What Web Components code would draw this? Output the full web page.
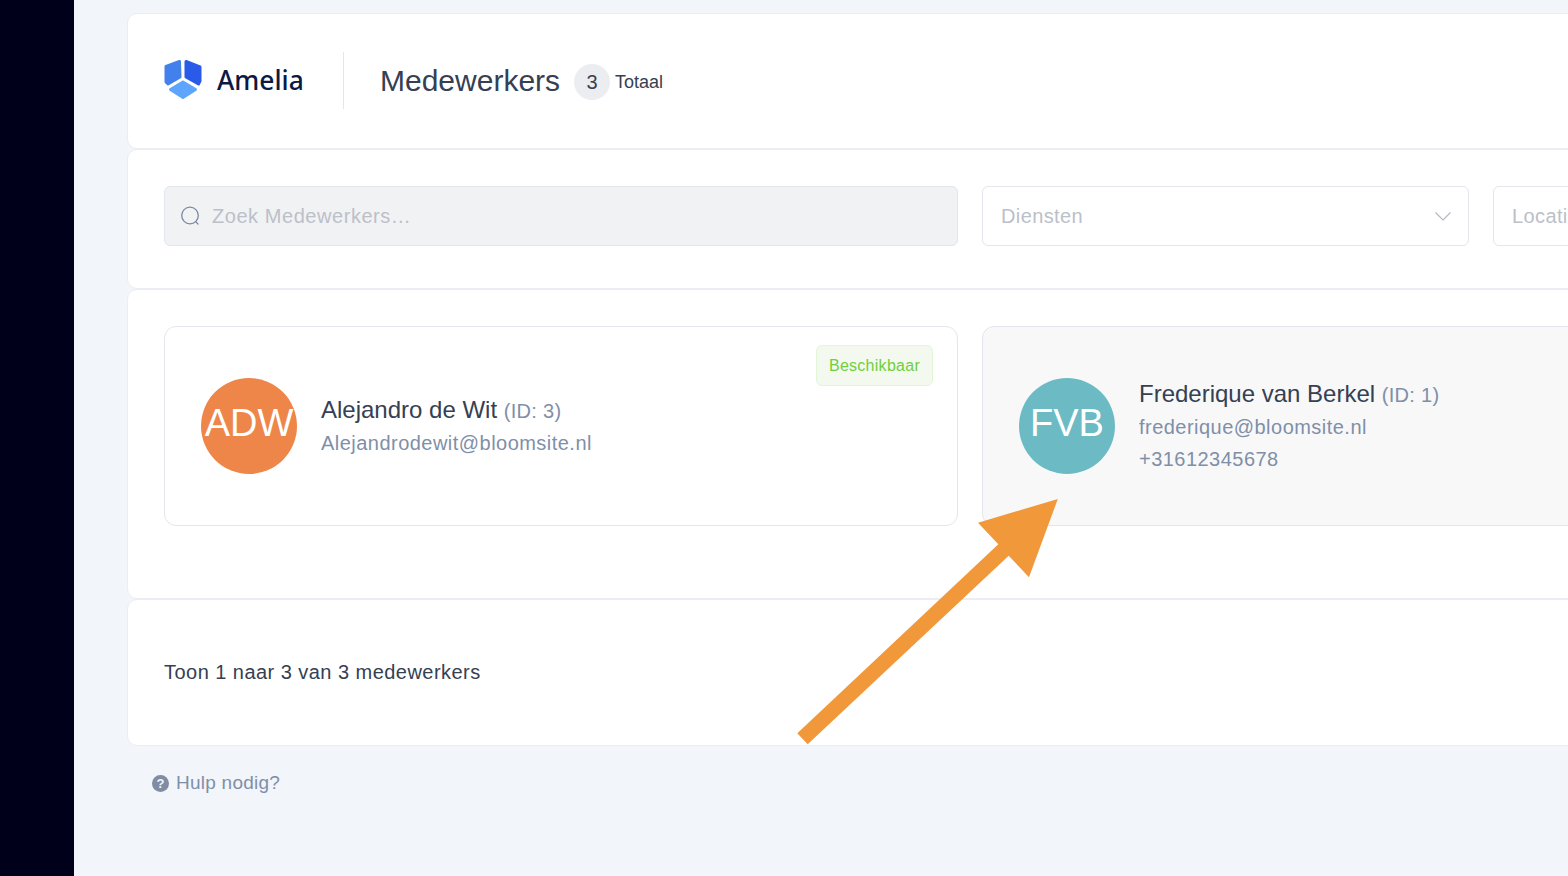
<!DOCTYPE html>
<html lang="nl">
<head>
<meta charset="utf-8">
<title>Medewerkers</title>
<style>
	html, body {
		margin: 0;
		height: 100%;
		overflow: hidden;
		background: #f2f5fa;
		font-family: "Liberation Sans", Arial, sans-serif;
		color: #354052;
	}
</style>
</head>
<body>
<app-shell>
	<app-panel style="--panel-height: 136px; --panel-top: 13px; --panel-pad: 38px 36px 0">
		<page-header count="3"></page-header>
	</app-panel>
	<app-panel style="--panel-height: 140px; --panel-pad: 36px 36px 0">
		<filter-bar>
			<search-box placeholder="Zoek Medewerkers…"></search-box>
			<select-box placeholder="Diensten"></select-box>
			<select-box placeholder="Locaties"></select-box>
		</filter-bar>
	</app-panel>
	<app-panel style="--panel-height: 310px; --panel-pad: 36px 36px 0">
		<employee-grid>
			<employee-card initials="ADW" color="#ee8549" name="Alejandro de Wit" employee-id="3" email="Alejandrodewit@bloomsite.nl" available></employee-card>
			<employee-card initials="FVB" color="#6cbbc4" name="Frederique van Berkel" employee-id="1" email="frederique@bloomsite.nl" phone="+31612345678" muted></employee-card>
		</employee-grid>
	</app-panel>
	<app-panel style="--panel-height: 147px; --panel-pad: 60px 36px 0">
		<span style="font-size: 20px; line-height: 24px; letter-spacing: .46px">Toon 1 naar 3 van 3 medewerkers</span>
	</app-panel>
	<help-link>Hulp nodig?</help-link>
</app-shell>
<call-arrow></call-arrow>

<script>
	class AppShell extends HTMLElement {
		constructor() {
			super();
			this.attachShadow({ mode: "open" }).innerHTML = `
			<style>
				:host {
					display: flex;
					height: 876px;
				}
				.side {
					flex: 0 0 74px;
					background: #00001a;
				}
				.main {
					flex: 0 0 1686px;
					margin-left: 53px;
					display: flex;
					flex-direction: column;
				}
			</style>
			<div class="side"></div>
			<div class="main"><slot></slot></div>`;
		}
	}

	class AppPanel extends HTMLElement {
		constructor() {
			super();
			this.attachShadow({ mode: "open" }).innerHTML = `
			<style>
				:host {
					display: block;
					box-sizing: border-box;
					height: var(--panel-height);
					margin-top: var(--panel-top, 0);
					padding: var(--panel-pad);
					background: #fff;
					border: 1px solid #ebedf2;
					border-radius: 10px;
				}
			</style>
			<slot></slot>`;
		}
	}

	class PageHeader extends HTMLElement {
		constructor() {
			super();
			this.attachShadow({ mode: "open" }).innerHTML = `
			<style>
				:host {
					display: flex;
					align-items: center;
					height: 57px;
				}
				.logo {
					display: flex;
					align-items: center;
					gap: 15px;
					width: 179px;
					height: 100%;
					border-right: 1px solid #e3e6ec;
					margin-right: 36px;
				}
				svg {
					display: block;
					margin-bottom: 1px;
				}
				.brand {
					font: 500 26.4px "Noto Sans", sans-serif;
					color: #0b1a42;
					margin-bottom: 2px;
				}
				h1 {
					margin: 0;
					font-size: 30px;
					font-weight: 400;
					color: #354052;
				}
				.count {
					width: 36px;
					height: 36px;
					margin: 3px 5px 0 14px;
					border-radius: 50%;
					background: #ebedf0;
					display: flex;
					align-items: center;
					justify-content: center;
					font-size: 20px;
				}
				.label {
					font-size: 18px;
					margin-top: 4px;
				}
			</style>
			<div class="logo">
				<svg width="38" height="40" viewBox="0 0 38 40">
					<path d="M2 6.5 L15.5 1.5 L16 17 L4 24 L2 22 Z" fill="#4281ec" stroke="#4281ec" stroke-width="3" stroke-linejoin="round"/>
					<path d="M22 1.5 L36 7 L36 21 L34.5 24 L22 17 Z" fill="#2a5ae8" stroke="#2a5ae8" stroke-width="3" stroke-linejoin="round"/>
					<path d="M19 22 L31.5 29.5 L19 37.5 L6.5 29.5 Z" fill="#5ea5fd" stroke="#5ea5fd" stroke-width="3" stroke-linejoin="round"/>
				</svg>
				<span class="brand">Amelia</span>
			</div>
			<h1>Medewerkers</h1>
			<span class="count">${this.getAttribute("count")}</span>
			<span class="label">Totaal</span>`;
		}
	}

	class FilterBar extends HTMLElement {
		constructor() {
			super();
			this.attachShadow({ mode: "open" }).innerHTML = `
			<style>
				:host {
					display: grid;
					grid-template-columns: 794px 487px 487px;
					gap: 24px;
				}
			</style>
			<slot></slot>`;
		}
	}

	const fieldStyle = `
		:host {
			display: flex;
			align-items: center;
			box-sizing: border-box;
			height: 60px;
			border: 1px solid #e3e6ec;
			border-radius: 6px;
			font-size: 20px;
			letter-spacing: .38px;
			color: #bcc0c9;
		}`;

	class SearchBox extends HTMLElement {
		constructor() {
			super();
			this.attachShadow({ mode: "open" }).innerHTML = `
			<style>
				${fieldStyle}
				:host {
					background: #f1f2f4;
					padding-left: 15px;
					gap: 12px;
					letter-spacing: .55px;
				}
				svg {
					display: block;
				}
			</style>
			<svg width="20" height="20" viewBox="0 0 20 20" fill="none" stroke="#7a8aa3" stroke-width="1.3" stroke-linecap="round">
				<circle cx="10" cy="9.5" r="8.3"/>
				<path d="M15.6 15.6 L18 18"/>
			</svg>
			<span>${this.getAttribute("placeholder")}</span>`;
		}
	}

	class SelectBox extends HTMLElement {
		constructor() {
			super();
			this.attachShadow({ mode: "open" }).innerHTML = `
			<style>
				${fieldStyle}
				:host {
					padding: 0 17px 0 18px;
					justify-content: space-between;
				}
				svg {
					display: block;
				}
			</style>
			<span>${this.getAttribute("placeholder")}</span>
			<svg width="16" height="9" viewBox="0 0 16 9" fill="none" stroke="#b4b8c2" stroke-width="1.2">
				<path d="M.5 .5 L8 8 L15.5 .5"/>
			</svg>`;
		}
	}

	class EmployeeGrid extends HTMLElement {
		constructor() {
			super();
			this.attachShadow({ mode: "open" }).innerHTML = `
			<style>
				:host {
					display: grid;
					grid-template-columns: 794px 794px;
					gap: 24px;
				}
			</style>
			<slot></slot>`;
		}
	}

	class EmployeeCard extends HTMLElement {
		constructor() {
			super();
			const phone = this.getAttribute("phone");
			this.attachShadow({ mode: "open" }).innerHTML = `
			<style>
				:host {
					position: relative;
					display: flex;
					align-items: center;
					gap: 24px;
					box-sizing: border-box;
					height: 200px;
					padding: 0 36px;
					background: ${this.hasAttribute("muted") ? "#f8f8f9" : "#fff"};
					border: 1px solid #e3e6ec;
					border-radius: 12px;
				}
				.avatar {
					flex: 0 0 96px;
					height: 96px;
					box-sizing: border-box;
					padding-bottom: 6px;
					border-radius: 50%;
					background: ${this.getAttribute("color")};
					color: #fff;
					font-size: 38px;
					font-kerning: none;
					display: flex;
					align-items: center;
					justify-content: center;
					white-space: nowrap;
				}
				.name {
					font-size: 24px;
					line-height: 32px;
					color: #354052;
				}
				.name small {
					font-size: 20px;
					letter-spacing: .3px;
					color: #7f8fa8;
				}
				.line {
					font-size: 20px;
					line-height: 32px;
					letter-spacing: .47px;
					color: #7f8fa8;
				}
				.badge {
					position: absolute;
					top: 18px;
					right: 24px;
					box-sizing: border-box;
					height: 41px;
					padding: 0 12px;
					display: flex;
					align-items: center;
					font-size: 16px;
					letter-spacing: .27px;
					color: #70cf3c;
					background: #f3f9ef;
					border: 1px solid #e2f5d6;
					border-radius: 6px;
				}
			</style>
			<div class="avatar">${this.getAttribute("initials")}</div>
			<div>
				<div class="name">${this.getAttribute("name")} <small>(ID: ${this.getAttribute("employee-id")})</small></div>
				<div class="line">${this.getAttribute("email")}</div>
				${phone ? `<div class="line">${phone}</div>` : ""}
			</div>
			${this.hasAttribute("available") ? `<div class="badge">Beschikbaar</div>` : ""}`;
		}
	}

	class HelpLink extends HTMLElement {
		constructor() {
			super();
			this.attachShadow({ mode: "open" }).innerHTML = `
			<style>
				:host {
					display: flex;
					align-items: center;
					gap: 7px;
					margin: 25px 0 0 25px;
					height: 24px;
					font-size: 19px;
					letter-spacing: .25px;
					color: #7f8fa8;
				}
				svg {
					display: block;
				}
				text {
					font: 700 13px "Liberation Sans", sans-serif;
				}
			</style>
			<svg width="17" height="17" viewBox="0 0 17 17">
				<circle cx="8.5" cy="8.5" r="8.5" fill="#7f8ca3"/>
				<text x="8.5" y="13" text-anchor="middle" fill="#f2f5fa">?</text>
			</svg>
			<span><slot></slot></span>`;
		}
	}

	class CallArrow extends HTMLElement {
		constructor() {
			super();
			this.attachShadow({ mode: "open" }).innerHTML = `
			<style>
				:host {
					position: absolute;
					left: 797px;
					top: 499px;
				}
				svg {
					display: block;
				}
			</style>
			<svg width="262" height="246" viewBox="797 499 262 246">
				<path d="M1057.8 499 L978 522.7 L998.3 544.3 L797.3 733.3 L807.7 744.3 L1008.7 555.7 L1029 577.3 Z" fill="#f1993a"/>
			</svg>`;
		}
	}

	customElements.define("app-shell", AppShell);
	customElements.define("app-panel", AppPanel);
	customElements.define("page-header", PageHeader);
	customElements.define("filter-bar", FilterBar);
	customElements.define("search-box", SearchBox);
	customElements.define("select-box", SelectBox);
	customElements.define("employee-grid", EmployeeGrid);
	customElements.define("employee-card", EmployeeCard);
	customElements.define("help-link", HelpLink);
	customElements.define("call-arrow", CallArrow);
</script>
</body>
</html>
